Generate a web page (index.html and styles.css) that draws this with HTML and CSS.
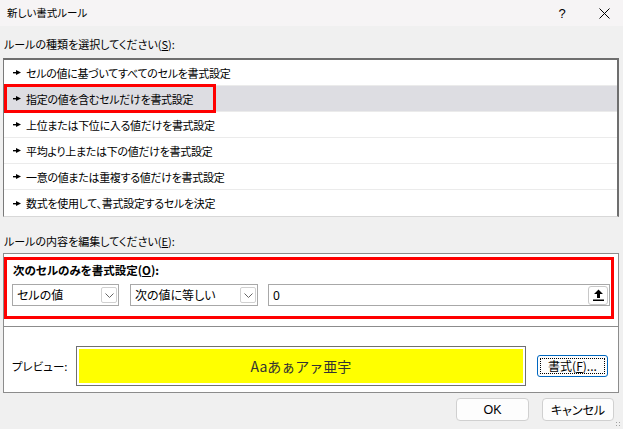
FILE: index.html
```html
<!DOCTYPE html>
<html lang="ja">
<head>
<meta charset="utf-8">
<link rel="stylesheet" href="styles.css">
</head>
<body>
<div class="dialog">
  <div class="titlebar">
    <span class="title">新しい書式ルール</span>
    <span class="controls"><span class="help">?</span><span class="close"><svg width="11" height="11" viewBox="0 0 11 11"><path d="M0.5 0.5L10.5 10.5M10.5 0.5L0.5 10.5" stroke="#000" stroke-width="1" fill="none"/></svg></span></span>
  </div>
  <div class="label label-top">ルールの種類を選択してください(<u>S</u>):</div>
  <ul class="list">
    <li class="item"><span class="bullet"><svg width="8" height="5" viewBox="0 0 8 5"><rect x="0" y="2" width="4" height="1.4" fill="#000"/><path d="M3 0L8 2.5L3 5Z" fill="#000"/></svg></span>セルの値に基づいてすべてのセルを書式設定</li>
    <li class="item selected"><span class="redmark"></span><span class="bullet"><svg width="8" height="5" viewBox="0 0 8 5"><rect x="0" y="2" width="4" height="1.4" fill="#000"/><path d="M3 0L8 2.5L3 5Z" fill="#000"/></svg></span>指定の値を含むセルだけを書式設定</li>
    <li class="item"><span class="bullet"><svg width="8" height="5" viewBox="0 0 8 5"><rect x="0" y="2" width="4" height="1.4" fill="#000"/><path d="M3 0L8 2.5L3 5Z" fill="#000"/></svg></span>上位または下位に入る値だけを書式設定</li>
    <li class="item"><span class="bullet"><svg width="8" height="5" viewBox="0 0 8 5"><rect x="0" y="2" width="4" height="1.4" fill="#000"/><path d="M3 0L8 2.5L3 5Z" fill="#000"/></svg></span>平均より上または下の値だけを書式設定</li>
    <li class="item"><span class="bullet"><svg width="8" height="5" viewBox="0 0 8 5"><rect x="0" y="2" width="4" height="1.4" fill="#000"/><path d="M3 0L8 2.5L3 5Z" fill="#000"/></svg></span>一意の値または重複する値だけを書式設定</li>
    <li class="item"><span class="bullet"><svg width="8" height="5" viewBox="0 0 8 5"><rect x="0" y="2" width="4" height="1.4" fill="#000"/><path d="M3 0L8 2.5L3 5Z" fill="#000"/></svg></span>数式を使用して、書式設定するセルを決定</li>
  </ul>
  <div class="label label-edit">ルールの内容を編集してください(<u>E</u>):</div>
  <div class="group">
    <div class="redbox">
      <div class="bold-label">次のセルのみを書式設定(<u>O</u>):</div>
      <div class="row">
        <div class="combo combo1"><span class="combo-text">セルの値</span><span class="combo-btn"><svg width="9" height="5" viewBox="0 0 9 5"><path d="M0.5 0.5L4.5 4.5L8.5 0.5" fill="none" stroke="#666" stroke-width="1"/></svg></span></div>
        <div class="combo combo2"><span class="combo-text">次の値に等しい</span><span class="combo-btn"><svg width="9" height="5" viewBox="0 0 9 5"><path d="M0.5 0.5L4.5 4.5L8.5 0.5" fill="none" stroke="#666" stroke-width="1"/></svg></span></div>
        <div class="textbox"><span class="tb-text">0</span><span class="ref-btn"><svg width="11" height="12" viewBox="0 0 11 12"><path d="M5.5 0.5L10 5H7V9H4V5H1Z" fill="#000"/><rect x="0" y="10.5" width="11" height="1.5" fill="#000"/></svg></span></div>
      </div>
    </div>
    <div class="separator"></div>
    <div class="preview-row">
      <span class="preview-label">プレビュー:</span>
      <div class="preview-box"><div class="preview-fill">Aaあぁアァ亜宇</div></div>
      <button class="btn format-btn"><span class="focus">書式(<u>F</u>)...</span></button>
    </div>
  </div>
  <div class="footer">
    <button class="btn ok">OK</button>
    <button class="btn cancel">キャンセル</button>
  </div>
  <div class="grip"></div>
</div>
</body>
</html>
```
FILE: styles.css
```css
* { box-sizing: border-box; }
html, body { margin: 0; padding: 0; }
body {
  width: 623px; height: 429px; overflow: hidden;
  background: #f0f0f0;
  font-family: "Noto Sans CJK JP", "Noto Sans", sans-serif;
  font-size: 12px;
  color: #000;
  font-feature-settings: "palt";
}
.dialog { position: relative; width: 623px; height: 429px; display: flex; flex-direction: column; }
.titlebar {
  height: 26px; background: #f6f4f5;
  display: flex; align-items: center; justify-content: space-between;
  padding-left: 7px;
}
.title { font-size: 10.5px; line-height: 16px; }
.controls { display: flex; align-items: center; }
.help { width: 20px; text-align: center; font-family: "Liberation Sans", sans-serif; font-size: 13px; margin-right: 22px; }
.close { width: 20px; display: flex; justify-content: center; margin-right: 9px; }
.label { line-height: 16px; padding-left: 4px; font-size: 11px; }
.label-top { padding-top: 10px; margin-bottom: 6px; }
.list {
  list-style: none; margin: 0 4px 0 3px; padding: 0;
  background: #fff;
  border-top: 2px solid #6e6e6e; border-right: 2px solid #6e6e6e;
  border-left: 1px solid #7a7a7a; border-bottom: 1px solid #d8d8d8;
  height: 159px;
}
.item {
  position: relative;
  height: 26px; display: flex; align-items: center;
  border-bottom: 1px solid #ebebeb;
  padding-left: 9px;
  font-size: 11px;
  letter-spacing: -0.3px;
}
.item:last-child { border-bottom: none; }
.item.selected { background: #dddde2; }
.bullet { width: 13px; display: flex; align-items: center; }
.redmark {
  position: absolute; left: 0; top: -2px; width: 212px; height: 29px;
  border: 3px solid #ff0000;
}
.label-edit { padding-top: 16px; margin-bottom: 4px; }
.group {
  margin: 0 4px 0 3px; background: #fff; border: 1px solid #8c8c8c;
  height: 140px;
  display: flex; flex-direction: column;
}
.redbox {
  margin: 3px 4px 0 0; border: 3px solid #ff0000;
  padding: 2px 0 10px 5px;
  height: 62px;
}
.bold-label { font-weight: bold; line-height: 16px; padding-left: 1px; font-size: 11.5px; }
.row { display: flex; margin-top: 6px; height: 22px; }
.combo {
  height: 22px; border: 1px solid #a8a8a8; background: #fff;
  display: flex; align-items: center; justify-content: space-between;
  padding: 0 1px 0 4px;
}
.combo1 { width: 107px; margin-right: 11px; }
.combo2 { width: 128px; margin-right: 10px; }
.combo-text { line-height: 16px; }
.combo-btn {
  width: 16px; height: 16px; border: 1px solid #d0d0d0; border-radius: 2px;
  display: flex; align-items: center; justify-content: center;
}
.textbox {
  width: 342px; height: 22px; border: 1px solid #a8a8a8; background: #fff;
  display: flex; align-items: center; justify-content: space-between;
  padding: 0 1px 0 4px;
}
.tb-text { font-family: "Noto Sans", sans-serif; font-size: 12px; }
.ref-btn {
  width: 20px; height: 19px; border: 1px solid #c8c8c8; border-radius: 3px; background: #fff;
  display: flex; align-items: center; justify-content: center;
}
.separator { margin-top: 7px; height: 1px; background: #8c8c8c; }
.preview-row { display: flex; align-items: center; padding: 19px 0 0 8px; }
.preview-label { width: 64px; font-size: 11.5px; }
.preview-box {
  width: 450px; height: 40px; border: 1px solid #707070; padding: 2px; background: #fff;
}
.preview-fill {
  height: 100%; background: #ffff00;
  display: flex; align-items: center; justify-content: center;
  font-family: "Noto Sans CJK JP", sans-serif; font-size: 14px; color: #333; font-feature-settings: normal;
}
.btn {
  font-family: "Noto Sans CJK JP", sans-serif; font-size: 12px; font-feature-settings: "palt";
  background: #fdfdfd; border: 1px solid #d0d0d0; border-radius: 4px; color: #000;
  padding: 0; height: 23px; display: flex; align-items: center; justify-content: center;
}
.format-btn {
  margin-left: 11px; width: 71px; height: 22px; border: 1px solid #0067c0; border-radius: 3px; padding: 2px;
}
.focus { flex: 1; height: 100%; border: 1px dotted #000; display: flex; align-items: center; justify-content: center; line-height: 14px; }
.footer { display: flex; justify-content: flex-end; padding: 5px 9px 0 0; gap: 13px; }
.ok { width: 73px; font-family: "Liberation Sans", sans-serif; font-size: 12.5px; }
.cancel { width: 72px; }
.grip {
  position: absolute; right: 2px; bottom: 2px; width: 6px; height: 6px;
  background-image: radial-gradient(circle, #a0a0a0 0.8px, transparent 1px);
  background-size: 3px 3px;
}
```
